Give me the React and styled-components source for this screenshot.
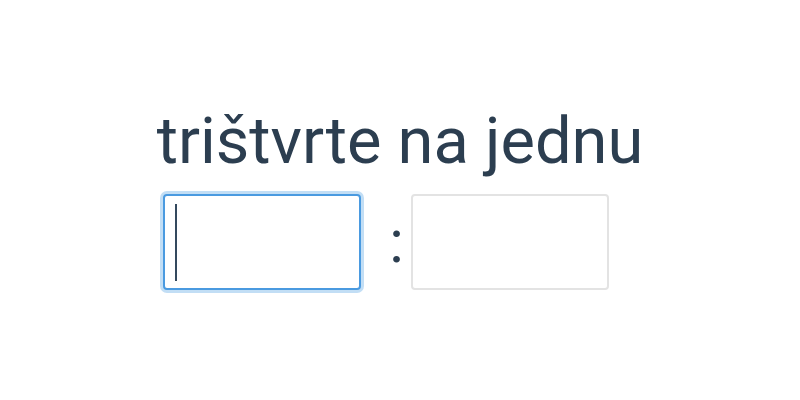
import React from 'react';
import styled, {createGlobalStyle} from 'styled-components';

const GlobalStyle = createGlobalStyle`
  html, body {
    margin: 0;
    padding: 0;
    background: #fff;
  }
  body {
    font-family: Roboto, "Liberation Sans", sans-serif;
    color: #2c3e50;
  }
`;

const Page = styled.div`
  width: 800px;
  height: 400px;
  display: flex;
  flex-direction: column;
  align-items: center;
  padding-top: 103px;
  box-sizing: border-box;
`;

const Title = styled.h1`
  margin: 0;
  font-size: 65px;
  font-weight: 400;
  line-height: normal;
  color: #2c3e50;
`;

const Row = styled.div`
  display: flex;
  align-items: center;
  margin-top: 15px;
  padding-right: 28px;
`;

const Field = styled.div`
  position: relative;
  width: 198px;
  height: 96px;
  box-sizing: border-box;
  border-radius: 4px;
  border: ${p => (p.active ? '2px solid #4a9ae0' : '2px solid #e3e3e3')};
  box-shadow: ${p => (p.active ? '0 0 0 3px #c2def5' : 'none')};
  background: #fff;
`;

const Input = styled.input`
  width: 100%;
  height: 100%;
  box-sizing: border-box;
  border: none;
  outline: none;
  background: transparent;
  padding: 0 0 0 10px;
  font-family: Roboto, "Liberation Sans", sans-serif;
  font-size: 64px;
  color: #2c3e50;
  caret-color: transparent;
`;

// drawn caret so the focused field shows it in a still picture
const Caret = styled.span`
  position: absolute;
  left: 10px;
  top: 8px;
  width: 2px;
  height: 77px;
  background: #34495e;
`;

const Colon = styled.span`
  font-size: 60px;
  line-height: 1;
  margin: 0 7px 0 28px;
  color: #2c3e50;
`;

export default function App() {
  return (
    <>
      <GlobalStyle />
      <Page>
        <Title>trištvrte na jednu</Title>
        <Row>
          <Field active>
            <Input type="text" />
            <Caret />
          </Field>
          <Colon>:</Colon>
          <Field>
            <Input type="text" />
          </Field>
        </Row>
      </Page>
    </>
  );
}
